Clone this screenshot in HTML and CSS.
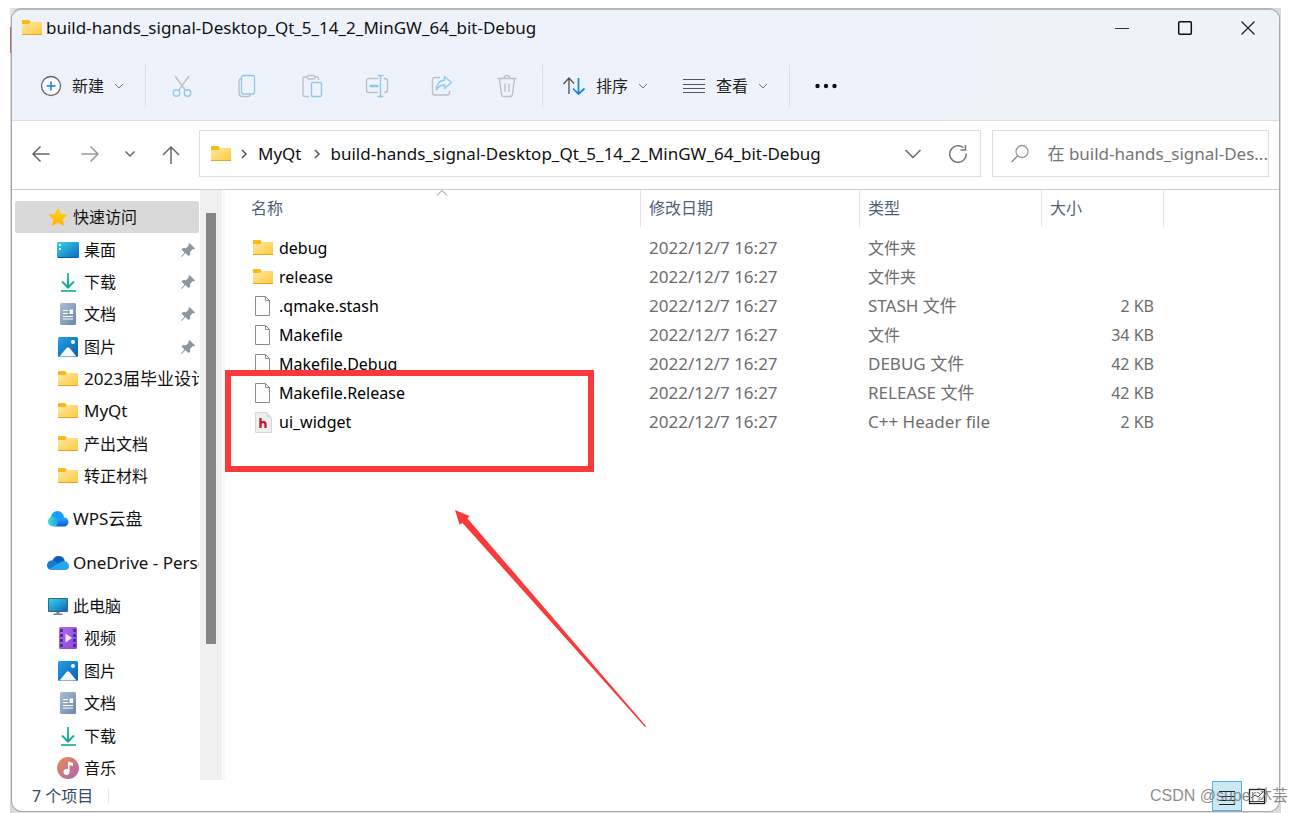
FILE: index.html
```html
<!DOCTYPE html>
<html lang="zh-CN">
<head>
<meta charset="utf-8">
<title>build-hands_signal-Desktop_Qt_5_14_2_MinGW_64_bit-Debug</title>
<link rel="stylesheet" href="styles.css">
</head>
<body>
<svg class="defs" aria-hidden="true">
  <defs>
    <linearGradient id="gFolder" x1="0" y1="0" x2="1" y2="1"><stop offset="0" stop-color="#ffe9a6"/><stop offset="1" stop-color="#ffc93a"/></linearGradient>
    <linearGradient id="gDesk" x1="0" y1="0" x2="1" y2="1"><stop offset="0" stop-color="#35d3ea"/><stop offset="1" stop-color="#0f67b8"/></linearGradient>
    <linearGradient id="gDown" x1="0" y1="0" x2="0" y2="1"><stop offset="0" stop-color="#36cf8b"/><stop offset="1" stop-color="#12a495"/></linearGradient>
    <linearGradient id="gDoc" x1="0" y1="0" x2="1" y2="1"><stop offset="0" stop-color="#aabfd6"/><stop offset="1" stop-color="#6a87a8"/></linearGradient>
    <linearGradient id="gPic" x1="0" y1="0" x2="1" y2="1"><stop offset="0" stop-color="#22a0ea"/><stop offset="1" stop-color="#0a5fae"/></linearGradient>
    <linearGradient id="gStar" x1="0" y1="0" x2="0" y2="1"><stop offset="0" stop-color="#ffd21e"/><stop offset="1" stop-color="#ffb300"/></linearGradient>
    <linearGradient id="gVideo" x1="0" y1="0" x2="1" y2="1"><stop offset="0" stop-color="#b16cf2"/><stop offset="1" stop-color="#8a45e0"/></linearGradient>
    <linearGradient id="gMusic" x1="0" y1="0" x2="1" y2="1"><stop offset="0" stop-color="#f28a50"/><stop offset="1" stop-color="#a965b5"/></linearGradient>
    <linearGradient id="gWps" x1="0" y1="0" x2="1" y2="0"><stop offset="0" stop-color="#3fe3c0"/><stop offset="1" stop-color="#1aa0f5"/></linearGradient>
    <linearGradient id="gWpsR" x1="0" y1="0" x2="0" y2="1"><stop offset="0" stop-color="#2aa8ff"/><stop offset="1" stop-color="#0a55e0"/></linearGradient>
    <symbol id="folder" viewBox="0 0 22 22"><path d="M1 4q0-1 1-1h6l2 2v4H1z" fill="#f9b916"/><path d="M1 7h7l2-2h11v13H1z" fill="url(#gFolder)"/><path d="M1 17.500h20" stroke="#e5a520"/></symbol>
    <symbol id="star" viewBox="0 0 22 22"><path d="M11 1.500l3 6.200 6.800.9-5 4.700 1.300 6.800-6.100-3.300-6.100 3.300 1.300-6.800-5-4.700 6.800-.9z" fill="url(#gStar)"/></symbol>
    <symbol id="desk" viewBox="0 0 22 22"><rect x="0" y="3" width="22" height="16" rx="1" fill="url(#gDesk)"/><path d="M2 5h2v2H2zM2 9h2v2H2z" fill="#d9fbff"/><path d="M1 18.500h20" stroke="#0b5da8"/></symbol>
    <symbol id="down" viewBox="0 0 22 22"><path d="M11 2v14M5 10.500l6 6 6-6" fill="none" stroke="url(#gDown)" stroke-width="2"/><path d="M10 2h2v14h-2z" fill="url(#gDown)"/><path d="M4 20h15" stroke="#22b98e" stroke-width="1.800"/></symbol>
    <symbol id="doc" viewBox="0 0 22 22"><rect x="3" y="0" width="16" height="22" rx="1.500" fill="url(#gDoc)"/><path d="M6 7.500h5M6 10.500h5M6 13.500h10M6 16h10" stroke="#fff" stroke-width="1.200"/><path d="M12.500 6.500H16V11h-3.500z" fill="#fff"/></symbol>
    <symbol id="pic" viewBox="0 0 22 22"><rect x="1" y="1" width="20" height="20" rx="1.500" fill="url(#gPic)"/><path d="M2.500 20.500l7-8.500q1.500-1.500 3 0l7 8.500z" fill="#f5f9ff"/><circle cx="16" cy="6" r="2" fill="#fff"/></symbol>
    <symbol id="wps" viewBox="0 0 22 22"><circle cx="10.500" cy="9.500" r="6.500" fill="#1b9cf5"/><circle cx="6" cy="13.500" r="5" fill="url(#gWps)"/><path d="M6 18.500c3 0 4-2 6-5 1.500-2.500 3-4 5-4 2.600 0 4.500 2 4.500 4.500s-2 4.500-4.500 4.500z" fill="url(#gWpsR)"/></symbol>
    <symbol id="onedrive" viewBox="0 0 22 22"><path d="M5 9.500C6 6 8.500 4 11.500 4c3 0 5.500 2 6.300 4.500l-5 4z" fill="#0b5fb8"/><path d="M0 13.500C0 10.500 2.300 8.500 5 8.500c2 0 3.500.8 5 2l4 2.500-9 5Q0 17.500 0 13.500z" fill="#0f7bd4"/><path d="M22 14.200c0-3-2-5-4.500-5.300-2.500-.2-4 1.100-5.500 2.100l-9 5.500q1 1.500 3 1.500h12q4 0 4-3.800z" fill="#28a5ea"/></symbol>
    <symbol id="pc" viewBox="0 0 22 22"><rect x="1" y="3" width="20" height="14" rx="1" fill="#3d6478"/><rect x="2" y="4" width="18" height="12" fill="url(#gDesk)"/><path d="M9.500 17h3v2h-3zM6.500 18.500h9V20h-9z" fill="#76868f"/></symbol>
    <symbol id="video" viewBox="0 0 22 22"><rect x="2" y="0" width="18" height="22" rx="1.500" fill="url(#gVideo)"/><path d="M4.500 2v18M17.500 2v18" stroke="#4a2a80" stroke-width="2.600" stroke-dasharray="3 2"/><path d="M8.500 6.500v9l6.500-4.500z" fill="#f1e8ff"/></symbol>
    <symbol id="music" viewBox="0 0 22 22"><circle cx="11" cy="11" r="11" fill="url(#gMusic)"/><path d="M11 4.500l5 1.500v3l-3.500-1v7h-1.500z" fill="#fff"/><circle cx="9.500" cy="15" r="3" fill="#fff"/></symbol>
    <symbol id="pin" viewBox="0 0 16 16"><path d="M9.500 1L15 6.500l-1.500 1-1-.2-2.500 2.700.2 2.800-1.700 1.200-3-3L1.500 15 1 14.500 4.500 10.500l-3-3L3 6l3 .2L8.600 3.800l-.2-1.300z" fill="#8a96a0"/></symbol>
    <symbol id="page" viewBox="0 0 22 22"><path d="M3.500 1.500h10l4 4v15h-14z" fill="#fcfcfc" stroke="#8c8c8c"/><path d="M13.500 1.500v4h4" fill="none" stroke="#8c8c8c"/></symbol>
    <symbol id="hpage" viewBox="0 0 22 22"><path d="M3.500 1.500h11l5 5v15h-16z" fill="#eeeff1" stroke="#d5d7da"/><path d="M14.500 1.500v5h5z" fill="#d9dbde"/><path d="M8.500 7v10M8.500 12.500q1-1.500 2.500-1.500 2.500 0 2.500 2.500V17" fill="none" stroke="#b92530" stroke-width="2.400"/></symbol>
    <symbol id="chev" viewBox="0 0 10 10"><path d="M1 3l4 4 4-4" fill="none" stroke="currentColor"/></symbol>
  </defs>
</svg>

<div class="desktop">
<main class="window">
  <header class="chrome">
    <div class="titlebar">
      <svg class="icon"><use href="#folder"/></svg>
      <h1 class="title">build-hands_signal-Desktop_Qt_5_14_2_MinGW_64_bit-Debug</h1>
      <button class="winbtn" aria-label="最小化"><svg viewBox="0 0 16 16"><path d="M1 8.500h14" stroke="#333"/></svg></button>
      <button class="winbtn" aria-label="最大化"><svg viewBox="0 0 16 16"><rect x="1.700" y="1.700" width="12.600" height="12.600" rx="1" fill="none" stroke="#111" stroke-width="1.500"/></svg></button>
      <button class="winbtn" aria-label="关闭"><svg viewBox="0 0 16 16"><path d="M1.500 1.500l13 13M14.500 1.500l-13 13" stroke="#222" stroke-width="1.300"/></svg></button>
    </div>
    <div class="toolbar">
      <button class="cmd"><svg class="icon" viewBox="0 0 22 22"><circle cx="11" cy="11" r="9.500" fill="#fafcff" stroke="#666" stroke-width="1.300"/><path d="M11 6.500v9M6.500 11h9" stroke="#1683d8" stroke-width="1.500"/></svg><span>新建</span><svg class="mini"><use href="#chev"/></svg></button>
      <span class="sep"></span>
      <button class="tool" aria-label="剪切" disabled><svg class="glyph" viewBox="0 0 24 24"><path d="M5 2l10.500 14.500M19 2L8.500 16.500" stroke="#bcc1c6"/><circle cx="6.500" cy="19" r="3.200" stroke="#93c7ea"/><circle cx="17.500" cy="19" r="3.200" stroke="#93c7ea"/></svg></button>
      <button class="tool" aria-label="复制" disabled><svg class="glyph" viewBox="0 0 24 24"><path d="M6 4.500q-2 .5-2 2V19q0 3.500 3.500 3.500H13q2 0 2.500-2" stroke="#bcc1c6"/><rect x="6.500" y="1.500" width="13" height="18.500" rx="2" stroke="#93c7ea"/></svg></button>
      <button class="tool" aria-label="粘贴" disabled><svg class="glyph" viewBox="0 0 24 24"><path d="M7 3H4.500Q3 3 3 4.500v16q0 2 1.500 2H9M15 3h2q1.500 0 1.500 1.500V6" stroke="#bcc1c6"/><rect x="7" y="1.500" width="8" height="3.500" rx="1.700" stroke="#bcc1c6"/><rect x="11.500" y="8.500" width="10" height="14" rx="1.500" stroke="#93c7ea"/></svg></button>
      <button class="tool" aria-label="重命名" disabled><svg class="glyph" viewBox="0 0 24 24"><path d="M13 4.500H4q-2.500 0-2.500 2.500v9q0 2.500 2.500 2.500h9M19 4.500q3.500 0 3.500 2.500v9q0 2.500-3.500 2.500" stroke="#bcc1c6"/><path d="M15.500 1.500v21M12.500 1.500h6M12.500 22.500h6" stroke="#93c7ea"/><path d="M4.500 12h9" stroke="#93c7ea" stroke-width="2.500"/></svg></button>
      <button class="tool" aria-label="共享" disabled><svg class="glyph" viewBox="0 0 24 24"><path d="M10 3.500H5Q2.500 3.500 2.500 6v12.500q0 2.500 2.500 2.500h12q2.500 0 2.500-2.500V17" stroke="#bcc1c6"/><path d="M14.500 2.500l7 6-7 6V11Q9 11 6.500 16 6.500 7 14.500 6z" stroke="#93c7ea" stroke-linejoin="round"/></svg></button>
      <button class="tool" aria-label="删除" disabled><svg class="glyph" viewBox="0 0 24 24"><path d="M2.500 4.500h19M4.500 4.500l2 16q.2 2 2 2h7q1.800 0 2-2l2-16M9 4.500q0-3 3-3t3 3M10 9.500v8.500M14 9.500v8.500" stroke="#bcc1c6"/></svg></button>
      <span class="sep"></span>
      <button class="cmd"><svg class="icon wide" viewBox="0 0 24 22"><path d="M7 19V3M1.500 9L7 3l5 5.500" fill="none" stroke="#555" stroke-width="1.400"/><path d="M16.500 3v16M11 13.500l5.500 5.500 6-5.500" fill="none" stroke="#1683d8" stroke-width="1.700"/></svg><span>排序</span><svg class="mini"><use href="#chev"/></svg></button>
      <button class="cmd"><svg class="icon wide" viewBox="0 0 24 22"><path d="M1 4.500h22M1 9.500h22M1 13.500h22M1 17.500h22" stroke="#555" stroke-width="1.200"/></svg><span>查看</span><svg class="mini"><use href="#chev"/></svg></button>
      <span class="sep"></span>
      <button class="tool" aria-label="查看更多"><svg class="glyph" viewBox="0 0 24 24"><g fill="#111"><circle cx="3.500" cy="12" r="2.200"/><circle cx="12" cy="12" r="2.200"/><circle cx="20.500" cy="12" r="2.200"/></g></svg></button>
    </div>
  </header>

  <nav class="navrow" aria-label="地址栏">
    <div class="navbtns">
      <button aria-label="返回"><svg viewBox="0 0 20 20"><path d="M18.500 10H2M9.500 2.500L2 10l7.500 7.500" stroke="#666"/></svg></button>
      <button aria-label="前进"><svg viewBox="0 0 20 20"><path d="M1.500 10H18M10.500 2.500L18 10l-7.500 7.500" stroke="#999"/></svg></button>
      <button class="narrow" aria-label="最近浏览的位置"><svg viewBox="0 0 20 20"><path d="M5.500 7.500L10 12l4.500-4.500" stroke="#666"/></svg></button>
      <button aria-label="向上"><svg viewBox="0 0 20 20"><path d="M10 20V3M2 11l8-8 8 8" stroke="#666"/></svg></button>
    </div>
    <div class="address">
      <svg class="icon"><use href="#folder"/></svg>
      <svg class="crumb" viewBox="0 0 10 10"><path d="M3 1l4 4-4 4" fill="none" stroke="#555" stroke-width="1.500"/></svg>
      <a href="#">MyQt</a>
      <svg class="crumb" viewBox="0 0 10 10"><path d="M3 1l4 4-4 4" fill="none" stroke="#555" stroke-width="1.500"/></svg>
      <a class="current" href="#">build-hands_signal-Desktop_Qt_5_14_2_MinGW_64_bit-Debug</a>
      <button aria-label="以前的位置"><svg viewBox="0 0 20 20"><path d="M2.500 6l7.500 7.500L17.500 6" stroke="#666"/></svg></button>
      <button aria-label="刷新"><svg viewBox="0 0 20 20"><path d="M18.300 9.500A8.300 8.300 0 1 1 15.500 3.800M17.500 1v5h-5" stroke="#777"/></svg></button>
    </div>
    <label class="search">
      <svg viewBox="0 0 20 20"><circle cx="12" cy="7.500" r="6" fill="none" stroke="#999" stroke-width="1.300"/><path d="M7.700 11.800L1.500 18" stroke="#888" stroke-width="1.300"/></svg>
      <input type="text" aria-label="搜索" placeholder="在 build-hands_signal-Des...">
    </label>
  </nav>

  <div class="body">
    <nav class="side" aria-label="导航窗格">
      <ul class="tree">
        <li class="root selected"><svg class="icon"><use href="#star"/></svg><span>快速访问</span></li>
        <li><svg class="icon"><use href="#desk"/></svg><span>桌面</span><svg class="pin"><use href="#pin"/></svg></li>
        <li><svg class="icon"><use href="#down"/></svg><span>下载</span><svg class="pin"><use href="#pin"/></svg></li>
        <li><svg class="icon"><use href="#doc"/></svg><span>文档</span><svg class="pin"><use href="#pin"/></svg></li>
        <li><svg class="icon"><use href="#pic"/></svg><span>图片</span><svg class="pin"><use href="#pin"/></svg></li>
        <li><svg class="icon"><use href="#folder"/></svg><span class="latin">2023届毕业设计</span></li>
        <li><svg class="icon"><use href="#folder"/></svg><span class="latin">MyQt</span></li>
        <li><svg class="icon"><use href="#folder"/></svg><span>产出文档</span></li>
        <li><svg class="icon"><use href="#folder"/></svg><span>转正材料</span></li>
        <li class="root spaced"><svg class="icon"><use href="#wps"/></svg><span class="latin">WPS云盘</span></li>
        <li class="root spaced"><svg class="icon"><use href="#onedrive"/></svg><span class="latin">OneDrive - Personal</span></li>
        <li class="root spaced"><svg class="icon"><use href="#pc"/></svg><span>此电脑</span></li>
        <li><svg class="icon"><use href="#video"/></svg><span>视频</span></li>
        <li><svg class="icon"><use href="#pic"/></svg><span>图片</span></li>
        <li><svg class="icon"><use href="#doc"/></svg><span>文档</span></li>
        <li><svg class="icon"><use href="#down"/></svg><span>下载</span></li>
        <li><svg class="icon"><use href="#music"/></svg><span>音乐</span></li>
      </ul>
      <div class="track"><div class="thumb"></div></div>
    </nav>

    <section class="content">
      <table class="files">
        <colgroup><col class="c-name"><col class="c-date"><col class="c-type"><col class="c-size"><col></colgroup>
        <thead>
          <tr><th class="sorted">名称<svg class="caret" viewBox="0 0 12 6"><path d="M1 5.500l5-5 5 5" fill="none" stroke="#888"/></svg></th><th>修改日期</th><th>类型</th><th>大小</th><th></th></tr>
        </thead>
        <tbody>
          <tr><td><span class="name"><svg class="icon"><use href="#folder"/></svg>debug</span></td><td class="latin">2022/12/7 16:27</td><td>文件夹</td><td></td><td></td></tr>
          <tr><td><span class="name"><svg class="icon"><use href="#folder"/></svg>release</span></td><td class="latin">2022/12/7 16:27</td><td>文件夹</td><td></td><td></td></tr>
          <tr><td><span class="name"><svg class="icon"><use href="#page"/></svg>.qmake.stash</span></td><td class="latin">2022/12/7 16:27</td><td class="latin">STASH 文件</td><td class="size">2 KB</td><td></td></tr>
          <tr><td><span class="name"><svg class="icon"><use href="#page"/></svg>Makefile</span></td><td class="latin">2022/12/7 16:27</td><td>文件</td><td class="size">34 KB</td><td></td></tr>
          <tr><td><span class="name"><svg class="icon"><use href="#page"/></svg>Makefile.Debug</span></td><td class="latin">2022/12/7 16:27</td><td class="latin">DEBUG 文件</td><td class="size">42 KB</td><td></td></tr>
          <tr><td><span class="name"><svg class="icon"><use href="#page"/></svg>Makefile.Release</span></td><td class="latin">2022/12/7 16:27</td><td class="latin">RELEASE 文件</td><td class="size">42 KB</td><td></td></tr>
          <tr><td><span class="name"><svg class="icon"><use href="#hpage"/></svg>ui_widget</span></td><td class="latin">2022/12/7 16:27</td><td class="latin">C++ Header file</td><td class="size">2 KB</td><td></td></tr>
        </tbody>
      </table>
      <div class="mark-box"></div>
      <svg class="mark-arrow" viewBox="0 0 192 218"><path d="M1 1l14.500 6-2 2.500L192 217l-1 1L8.500 14l-3 1.500z" fill="#fb3939"/></svg>
    </section>
  </div>

  <footer class="status">
    <span class="count">7 个项目</span>
    <button class="view on" aria-label="详细信息"><svg viewBox="0 0 20 20"><path d="M2 5.500h16M2 10.500h16M2 14.500h16M2 18.500h16" stroke="#222" stroke-width="1.200"/></svg></button>
    <button class="view" aria-label="大图标"><svg viewBox="0 0 20 20"><rect x="2.500" y="3.500" width="15" height="14" fill="none" stroke="#222" stroke-width="1.300"/><path d="M3 15.500h14M4 12l4-3 3 2 5-5" fill="none" stroke="#444"/></svg></button>
  </footer>
</main>
</div>
<div class="watermark">CSDN @super沐芸</div>
</body>
</html>
```
FILE: styles.css
```css
* { box-sizing: border-box; }

body {
  margin: 0;
  padding: 8px 22px 0 10px;
  height: 100vh;
  display: flex;
  flex-direction: column;
  overflow: hidden;
  position: relative;
  background: #fff;
  color: #111;
  font-family: "Noto Sans", "Noto Sans CJK SC", sans-serif;
  font-size: 16px;
  line-height: 24px;
}

.defs { position: absolute; width: 0; height: 0; }
button { border: 0; background: none; padding: 0; font: inherit; color: inherit; }
a { color: inherit; text-decoration: none; }
svg { flex: none; display: block; }
.icon { width: 22px; height: 22px; }
.icon.wide { width: 24px; }
.latin { font-size: 17px; }

.desktop {
  flex: 1;
  min-height: 0;
  display: flex;
  padding: 0 1px 1px;
  background: linear-gradient(#e4e4e4 0 19px, #c46464 19px 45px, #d8d8d8 45px) left / 4px 100% no-repeat #dcdcdc;
}

.window {
  flex: 1;
  min-width: 0;
  display: flex;
  flex-direction: column;
  border: 1px solid #a9a9a9;
  border-top: 2px solid #b4b6b8;
  border-radius: 11px;
  background: #fff;
  overflow: hidden;
}

.chrome {
  background: linear-gradient(100deg, #eef3fb 70%, #edf3f8 85%);
  border-bottom: 1px solid #d9dee2;
}
.titlebar { display: flex; align-items: center; height: 38px; padding: 0 0 2px 9px; }
.title { flex: 1; margin: 0 0 0 3px; font-size: 17px; font-weight: 400; }
.winbtn { width: 63px; height: 36px; display: grid; place-items: center; }
.winbtn svg { width: 16px; height: 16px; }

.toolbar { display: flex; align-items: center; height: 72px; padding: 3px 0 0 12px; }
.cmd { display: flex; align-items: center; gap: 10px; height: 40px; padding: 0 18px 0 16px; color: #222; }
.sep { width: 1px; height: 42px; margin: 0 3px; background: #d9dee4; }
.tool { width: 65px; height: 40px; display: grid; place-items: center; }
.glyph { width: 24px; height: 24px; fill: none; stroke-width: 1.4; }
.mini { width: 10px; height: 10px; color: #777; }

.navrow {
  display: flex;
  align-items: center;
  height: 69px;
  padding: 0 10px 3px 0;
  border-bottom: 1px solid #cfcfcf;
}
.navbtns { display: flex; padding: 0 4px; }
.navbtns button { width: 49px; height: 36px; display: grid; place-items: center; }
.navbtns .narrow { width: 32px; }
.navrow button svg { width: 20px; height: 20px; fill: none; stroke-width: 1.5; }
.address {
  flex: 1;
  min-width: 0;
  height: 47px;
  display: flex;
  align-items: center;
  border: 1px solid #dedede;
  padding-left: 10px;
}
.address a { padding-right: 3px; white-space: nowrap; color: #111; font-size: 17px; }
.address .current { flex: 1; min-width: 0; overflow: hidden; }
.address button { width: 45px; height: 40px; display: grid; place-items: center; }
.crumb { width: 10px; height: 10px; margin: 0 9px 0 7px; }
.search {
  flex: 0 0 22%;
  min-width: 0;
  height: 47px;
  display: flex;
  align-items: center;
  gap: 17px;
  margin-left: 11px;
  padding-left: 17px;
  border: 1px solid #dedede;
}
.search svg { width: 20px; height: 20px; }
.search input { flex: 1; min-width: 0; border: 0; outline: 0; padding: 0; font: inherit; font-size: 17px; background: none; }
.search input::placeholder { color: #757575; opacity: 1; }

.body { flex: 1; min-height: 0; display: flex; }
.side { flex: 0 0 213px; display: flex; overflow: hidden; border-right: 2px solid #f7f7f7; }
.tree {
  flex: 1;
  min-width: 0;
  display: flex;
  flex-direction: column;
  margin: 11px 1px -4px 3px;
  padding: 0;
  list-style: none;
}
.tree li {
  flex: 1 1 0;
  min-height: 0;
  display: flex;
  align-items: center;
  gap: 5px;
  padding-left: 42px;
  white-space: nowrap;
  overflow: hidden;
}
.tree .root { gap: 4px; padding-left: 32px; }
.tree .spaced { margin-top: 11px; }
.tree .selected { background: #d9d9d9; border-radius: 2px; }
.pin { width: 16px; height: 16px; margin: 0 3px 0 auto; }
.track { width: 22px; margin-right: 1px; padding: 23px 6px 0; background: #f0f0f0; }
.thumb { height: 76%; background: #858585; }

.content { flex: 1; min-width: 0; position: relative; padding-left: 18px; }
.files { width: 100%; table-layout: fixed; border-collapse: separate; border-spacing: 0; }
.c-name { width: 398px; }
.c-date { width: 219px; }
.c-type { width: 182px; }
.c-size { width: 122px; }
.files th {
  height: 37px;
  padding: 0 8px 2px;
  border-right: 1px solid #e4e4e4;
  color: #4c607a;
  font-weight: 400;
  text-align: left;
}
.files th:last-child { border-right: 0; }
.files .sorted { position: relative; }
.caret { position: absolute; top: 0; left: calc(50% - 6px); width: 12px; height: 6px; }
.files tbody::before { content: ""; display: block; height: 6px; }
.files td { height: 29px; padding: 0 8px; color: #6d6d6d; white-space: nowrap; }
.files td:first-child { padding-left: 9px; }
.files .size { text-align: right; padding-right: 10px; }
.name { display: flex; align-items: center; gap: 5px; color: #000; }

.mark-box {
  position: absolute;
  left: 0;
  top: 180px;
  width: 369px;
  height: 102px;
  border: 6px solid #fb3939;
}
.mark-arrow { position: absolute; left: 229px; top: 319px; width: 192px; height: 218px; }

.status { display: flex; align-items: center; height: 31px; padding: 0 7px 0 20px; }
.count { margin-right: auto; padding-right: 15px; border-right: 1px solid #e8e8e8; line-height: 16px; color: #34486a; }
.view { width: 30px; height: 30px; display: grid; place-items: center; }
.view svg { width: 20px; height: 20px; }
.view.on { background: #cce8f6; border: 1px solid #55b4de; }

.watermark {
  position: absolute;
  right: 15px;
  bottom: 5px;
  color: rgba(110, 110, 110, 0.8);
  font-family: "Liberation Sans", "Noto Sans CJK SC", sans-serif;
}
```
